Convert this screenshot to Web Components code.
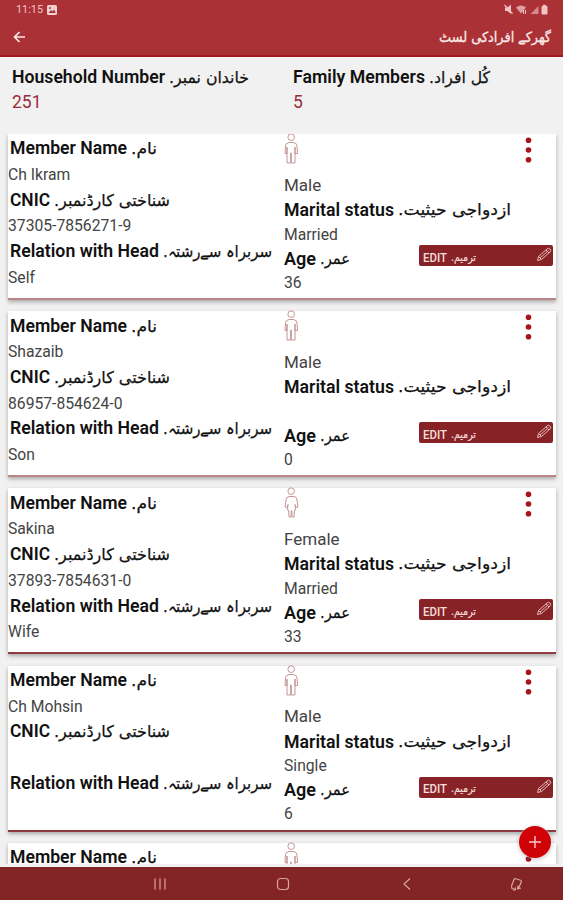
<!DOCTYPE html>
<html lang="en">
<head>
<meta charset="utf-8">
<title>Family Members</title>
<style>
  body {
    margin: 0;
    font-family: Roboto, "DejaVu Sans", sans-serif;
    --color-bar: #aa3135;
    --color-accent: #872327;
    --color-nav: #832426;
  }
</style>
</head>
<body>
<household-app></household-app>
<script>
/**
 * Single line of text, scaled horizontally to the given width
 * @example
 * <fit-text width="117">Member Name</fit-text>
 */
window.customElements.define('fit-text', class extends HTMLElement {
  constructor() {
    super();

    this.attachShadow({ mode: 'open' }).innerHTML = `<style>
  :host {
    display: block;
    flex: none;
    white-space: nowrap;
  }

  span {
    display: inline-block;
    transform-origin: 0 50%;
  }
</style>
<span><slot></slot></span>`;
  }

  connectedCallback() {
    const width = Number(this.getAttribute('width'));
    const span = this.shadowRoot.querySelector('span');
    this.style.width = `${width}px`;
    span.style.transform = `scaleX(${width / span.getBoundingClientRect().width})`;
  }
});

/**
 * Bold english label followed by its urdu translation
 */
window.customElements.define('bilingual-label', class extends HTMLElement {
  constructor() {
    super();

    this.attachShadow({ mode: 'open' }).innerHTML = `<style>
  :host {
    display: flex;
    gap: 4px;
    font-size: 17.6px;
    font-weight: 600;
    color: #111;
  }

  .ur {
    font-family: "DejaVu Sans", sans-serif;
    font-size: 16.2px;
    font-weight: 400;
    -webkit-text-stroke: .25px #111;
  }
</style>
<fit-text width="${this.getAttribute('en-width')}">${this.getAttribute('en')}</fit-text>
<fit-text class="ur" width="${this.getAttribute('ur-width')}"><bdi dir="rtl">${this.getAttribute('ur')}.</bdi></fit-text>`;
  }
});

window.customElements.define('status-bar', class extends HTMLElement {
  constructor() {
    super();

    this.attachShadow({ mode: 'open' }).innerHTML = `<style>
  :host {
    display: flex;
    height: 19px;
    padding: 0 13px 0 16px;
    align-items: center;
    justify-content: space-between;
    font-size: 10.5px;
    color: #f0c4c4;
  }

  div {
    display: flex;
    gap: 4px;
    align-items: center;
  }

  svg {
    display: block;
  }
</style>
<div>
  <fit-text width="27">11:15</fit-text>
  <svg width="10" height="10" viewBox="0 0 10 10"><rect width="10" height="10" rx="1.5" fill="#f3d0d0"/><path d="M1.5 8 4 5l1.500 1.500L7 4.500 8.800 8z" fill="#aa3135"/><circle cx="3" cy="3" r=".9" fill="#aa3135"/></svg>
</div>
<svg width="46" height="11" viewBox="0 0 46 11" fill="#f0c4c4">
  <path d="M1 3.500h2.500l3.500-3v9.500L3.500 7H1z"/><path d="M.5 1l8 8.500" stroke="#f0c4c4" stroke-width="1.200"/>
  <path d="M12 3.500q5-4 10 0l-5 6z" opacity=".75"/><path d="M19.500 6v4M21.500 6v4" stroke="#f0c4c4"/>
  <path d="M26.500 10l8-8v8z" opacity=".6"/>
  <rect x="37.500" y="2" width="6" height="8.500" rx="1"/><rect x="39" y=".8" width="3" height="2"/>
</svg>`;
  }
});

window.customElements.define('app-header', class extends HTMLElement {
  constructor() {
    super();

    this.attachShadow({ mode: 'open' }).innerHTML = `<style>
  :host {
    display: block;
    height: 57px;
    box-sizing: border-box;
    border-bottom: 2px solid #a01820;
    background: var(--color-bar);
    color: #fbe9e9;
  }

  header {
    display: flex;
    height: 36px;
    padding: 0 12px 0 13px;
    align-items: center;
    justify-content: space-between;
  }

  fit-text {
    font-family: "DejaVu Sans", sans-serif;
    font-size: 14px;
    -webkit-text-stroke: .3px #fbe9e9;
  }
</style>
<status-bar></status-bar>
<header>
  <svg width="13" height="12" viewBox="0 0 13 12" fill="none" stroke="#fbe9e9" stroke-width="1.700"><path d="M6.500 1 1.500 6l5 5M1.500 6H12"/></svg>
  <fit-text width="112"><bdi dir="rtl">گھرکے افرادکی لسٹ</bdi></fit-text>
</header>`;
  }
});

window.customElements.define('household-summary', class extends HTMLElement {
  constructor() {
    super();

    this.attachShadow({ mode: 'open' }).innerHTML = `<style>
  :host {
    display: grid;
    grid-template-columns: 281px 1fr;
    height: 77px;
    padding: 8px 0 0 12px;
    box-sizing: border-box;
    line-height: 25px;
  }

  p {
    margin: 0;
    font-size: 17.5px;
    color: #9c2b38;
  }
</style>
<div>
  <bilingual-label en="Household Number" en-width="153" ur="خاندان نمبر" ur-width="80"></bilingual-label>
  <p>251</p>
</div>
<div>
  <bilingual-label en="Family Members" en-width="132" ur="کُل افراد" ur-width="61"></bilingual-label>
  <p>5</p>
</div>`;
  }
});

window.customElements.define('person-icon', class extends HTMLElement {
  constructor() {
    super();

    const body = this.hasAttribute('female')
      ? 'M5 9.500Q2 10 2 13L1 20l2 .5 1-3-.5 5.500h1l.5 7h2V24h1v6h2l.5-7h1L11 17.500l1 3 2-.5-1-7q0-3-3-3.500z'
      : 'M5 9.500Q1.500 10 1.500 13L1 20.500h2V14v16h3.700V20h.6v10H11V14v6.500h2.500L13 13q0-3-3.500-3.500z';
    this.attachShadow({ mode: 'open' }).innerHTML = `<style>
  :host {
    display: block;
  }
</style>
<svg width="15" height="31" viewBox="0 0 15 31" fill="none" stroke="#bd8a8c" stroke-width=".9"><circle cx="7.200" cy="4.200" r="3.300"/><path d="${body}"/></svg>`;
  }
});

window.customElements.define('edit-button', class extends HTMLElement {
  constructor() {
    super();

    this.attachShadow({ mode: 'open' }).innerHTML = `<style>
  :host {
    display: flex;
    width: 134px;
    height: 21px;
    padding: 0 1px 0 4px;
    box-sizing: border-box;
    gap: 4px;
    align-items: center;
    border-radius: 2px;
    background: var(--color-accent);
    font-size: 12px;
    font-weight: 500;
    line-height: 14px;
    color: #f6dede;
  }

  fit-text {
    margin-top: 4px;
  }

  .ur {
    font-family: "DejaVu Sans", sans-serif;
    font-size: 11px;
    -webkit-text-stroke: .2px #f6dede;
  }

  svg {
    margin: -2px 0 0 auto;
  }
</style>
<fit-text width="24">EDIT</fit-text>
<fit-text class="ur" width="25"><bdi dir="rtl">ترمیم.</bdi></fit-text>
<svg width="16" height="15" viewBox="0 0 16 15" fill="none" stroke="#e9b9b9" stroke-width="1"><path d="M1.500 13.500l1-4L11 2q1.500-1.500 3 0t0 3L5.500 12.500zM2.500 9.500l3 3M4 11l8.500-7.500M10 3l3 3"/></svg>`;
  }
});

window.customElements.define('member-card', class extends HTMLElement {
  constructor() {
    super();

    const value = (name) => this.getAttribute(name) || '';
    // a collapsed card shows only its first row
    const open = !this.hasAttribute('collapsed');
    this.attachShadow({ mode: 'open' }).innerHTML = `<style>
  :host {
    display: grid;
    position: relative;
    flex: none;
    grid-template-columns: 276px 1fr;
    height: 166px;
    box-sizing: border-box;
    border-bottom: 2px solid var(--card-line, #8e3a40);
    background: #fff;
    box-shadow: 0 2px 4px rgba(0, 0, 0, .3);
  }

  .left {
    padding-top: 2.400px;
    line-height: 25.700px;
  }

  .left bilingual-label {
    padding-left: 2px;
  }

  .right {
    line-height: 24px;
  }

  p {
    height: 1lh;
    margin: 0;
    font-size: 15.700px;
    color: #444;
  }

  .gender {
    height: 25.500px;
    line-height: 25.500px;
    font-size: 17px;
  }

  .top {
    display: flex;
    height: 38.500px;
    justify-content: space-between;
  }

  .top svg {
    margin: 2px 24px 0 0;
  }

  person-icon {
    margin-top: -1px;
  }

  .age {
    display: flex;
    height: 24px;
    padding-right: 3px;
    justify-content: space-between;
  }

  .status {
    height: 24.500px;
  }

  edit-button {
    margin-top: -1.500px;
  }
</style>
<div class="left">
  <bilingual-label en="Member Name" en-width="117" ur="نام" ur-width="26"></bilingual-label>
  ${open ? `<p>${value('name')}</p>
  <bilingual-label en="CNIC" en-width="40" ur="شناختی کارڈنمبر" ur-width="116"></bilingual-label>
  <p>${value('cnic')}</p>
  <bilingual-label en="Relation with Head" en-width="149" ur="سربراہ سےرشتہ" ur-width="109"></bilingual-label>
  <p>${value('relation')}</p>` : ''}
</div>
<div class="right">
  <div class="top">
    <person-icon ${value('gender') === 'Female' ? 'female' : ''}></person-icon>
    <svg width="7" height="28" viewBox="0 0 7 28" fill="#a8141c"><circle cx="3.500" cy="4.200" r="2.800"/><circle cx="3.500" cy="14" r="2.800"/><circle cx="3.500" cy="23.800" r="2.800"/></svg>
  </div>
  ${open ? `<p class="gender">${value('gender')}</p>
  <bilingual-label class="status" en="Marital status" en-width="110" ur="ازدواجی حیثیت" ur-width="113"></bilingual-label>
  <p>${value('marital')}</p>
  <div class="age">
    <bilingual-label en="Age" en-width="32" ur="عمر" ur-width="30"></bilingual-label>
    <edit-button></edit-button>
  </div>
  <p>${value('age')}</p>` : ''}
</div>`;
  }
});

window.customElements.define('android-nav', class extends HTMLElement {
  constructor() {
    super();

    this.attachShadow({ mode: 'open' }).innerHTML = `<style>
  :host {
    display: grid;
    flex: none;
    grid-template-columns: 98px 123px 124px 123px 95px;
    height: 33px;
    align-items: center;
    justify-items: center;
    background: var(--color-nav);
  }

  svg {
    margin-top: 1px;
    fill: none;
    stroke: #d9a3a3;
    stroke-width: 1.200px;
  }
</style>
<i></i>
<svg width="14" height="14" viewBox="0 0 14 14"><path d="M2 1.500v11M7 1.500v11M12 1.500v11"/></svg>
<svg width="14" height="14" viewBox="0 0 14 14"><rect x="1.500" y="1.500" width="11" height="11" rx="3"/></svg>
<svg width="14" height="14" viewBox="0 0 14 14"><path d="M10 1.500 4 7l6 5.500"/></svg>
<svg width="14" height="14" viewBox="0 0 14 14"><path d="M2.500 9 5 2.500q.5-1.200 1.700-.8L11.500 3.300q1.200.5.800 1.700L9.500 11.500M9 8.500l-.5 3.500L12 11M2.500 9l.5 2.500 3.500 1M6 10.500l.5 2-2 1"/></svg>`;
  }
});

window.customElements.define('add-button', class extends HTMLElement {
  constructor() {
    super();

    this.attachShadow({ mode: 'open' }).innerHTML = `<style>
  :host {
    display: grid;
    width: 32px;
    height: 32px;
    place-items: center;
    border-radius: 50%;
    background: #cf0208;
    box-shadow: 0 0 2px #fff, 0 1px 4px rgba(0, 0, 0, .3);
  }
</style>
<svg width="12" height="12" viewBox="0 0 12 12" stroke="#f8c9c9" stroke-width="1.400"><path d="M6 0v12M0 6h12"/></svg>`;
  }
});

/**
 * Entry point element
 */
window.customElements.define('household-app', class extends HTMLElement {
  constructor() {
    super();

    this.attachShadow({ mode: 'open' }).innerHTML = `<style>
  :host {
    display: flex;
    position: relative;
    flex-direction: column;
    height: 900px;
    overflow: hidden;
    background: #f1f1f1;
  }

  app-header, household-summary {
    flex: none;
  }

  main {
    display: flex;
    flex: 1;
    flex-direction: column;
    gap: 11.200px;
    min-height: 0;
    margin-bottom: 3px;
    padding: 0 7px 0 8px;
    overflow: hidden;
  }

  .soft {
    --card-line: #b98688;
  }

  add-button {
    position: absolute;
    right: 12px;
    bottom: 42px;
  }
</style>
<app-header></app-header>
<household-summary></household-summary>
<main>
  <member-card class="soft" name="Ch Ikram" cnic="37305-7856271-9" relation="Self" gender="Male" marital="Married" age="36"></member-card>
  <member-card class="soft" name="Shazaib" cnic="86957-854624-0" relation="Son" gender="Male" age="0"></member-card>
  <member-card name="Sakina" cnic="37893-7854631-0" relation="Wife" gender="Female" marital="Married" age="33"></member-card>
  <member-card name="Ch Mohsin" gender="Male" marital="Single" age="6"></member-card>
  <member-card collapsed></member-card>
</main>
<add-button></add-button>
<android-nav></android-nav>`;
  }
});
</script>
</body>
</html>
